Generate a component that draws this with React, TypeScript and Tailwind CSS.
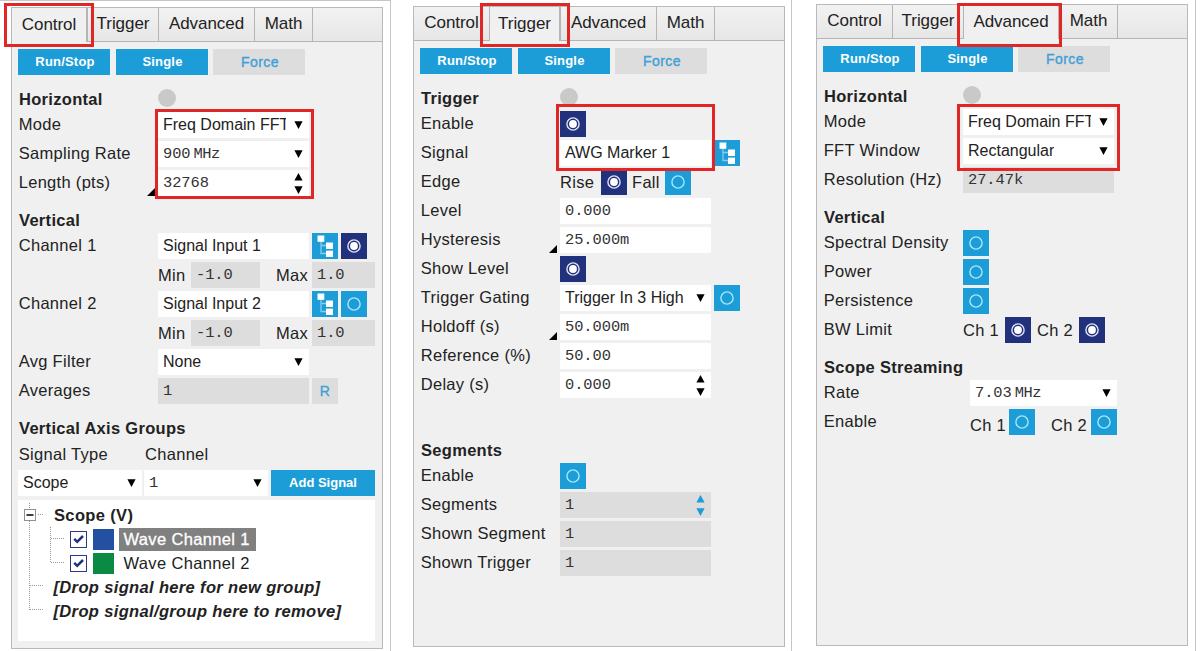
import React from 'react'
import clsx from 'clsx'

const TABS = [
  { name: 'Control', width: 'w-[76px]' },
  { name: 'Trigger', width: 'w-[71px]' },
  { name: 'Advanced', width: 'w-[96px]' },
  { name: 'Math', width: 'w-[58px]' },
]

const Arrow = ({ up = false }: { up?: boolean }) => (
  <svg width="9" height="8" viewBox="0 0 9 8" className="block shrink-0" fill="currentColor">
    <path d={up ? 'M4.5 0 L8.6 7.6 H0.4 Z' : 'M0.4 0.2 H8.6 L4.5 8 Z'} />
  </svg>
)

const Spinner = () => (
  <span className="flex shrink-0 flex-col gap-[5px]">
    <Arrow up />
    <Arrow />
  </span>
)

const Radio = ({ on = false }: { on?: boolean }) => (
  <button className={clsx('h-[26px] w-[26px] shrink-0', on ? 'bg-[#22317c]' : 'bg-[#1c9dd8]')}>
    <svg width="26" height="26" viewBox="0 0 26 26" className="block" fill="none">
      <circle cx="13" cy="13" r="6.1" stroke={on ? '#dfe4f5' : '#a6e8fa'} strokeWidth="1.4" />
      {on && <circle cx="13" cy="13" r="3.9" fill="#ffffff" />}
    </svg>
  </button>
)

const TreeButton = () => (
  <button className="h-[26px] w-[26px] shrink-0 bg-[#1c9dd8]">
    <svg width="26" height="26" viewBox="0 0 26 26" className="block">
      <path d="M9 8 V20.5 H15 M9 12.5 H15" fill="none" stroke="#86cdec" strokeWidth="1.3" />
      <rect x="5.5" y="2.5" width="6.8" height="6.3" fill="#ffffff" />
      <rect x="14" y="9.5" width="7" height="6.5" fill="#ffffff" />
      <rect x="14" y="17.6" width="7" height="6.4" fill="#ffffff" />
    </svg>
  </button>
)

type FieldProps = {
  value: string
  unit?: string
  mono?: boolean
  disabled?: boolean
  kind?: 'text' | 'select' | 'spin'
  width?: string
}

const Field = ({ value, unit, mono, disabled, kind = 'text', width = 'w-[151px]' }: FieldProps) => (
  <div
    className={clsx(
      'flex h-[26px] shrink-0 items-center justify-between pl-[5px] pr-[6.5px]',
      disabled ? 'bg-[#dddddd]' : 'bg-white',
      width
    )}
  >
    <span
      className={clsx(
        'max-w-[123px] overflow-hidden whitespace-nowrap leading-[22px]',
        mono
          ? 'pb-[1px] font-["Liberation_Mono",monospace] text-[15.4px] tracking-[-0.05px] text-[#333333]'
          : 'text-[16px] tracking-normal text-[#222222]'
      )}
    >
      {value}
      {unit && <span className="ml-[3px] tracking-[-0.5px]">{unit}</span>}
    </span>
    {kind !== 'text' && (
      <span className={disabled ? 'text-[#1c9dd8]' : 'text-black'}>
        {kind === 'select' ? <Arrow /> : <Spinner />}
      </span>
    )}
  </div>
)

const Heading = ({ children, dot }: { children: React.ReactNode; dot?: boolean }) => (
  <div className="flex h-[37px] items-start">
    <h2 className="mt-[12px] w-[140px] shrink-0 whitespace-nowrap pl-[1px] font-bold leading-6">{children}</h2>
    {dot && <span className="mt-[14px] h-[18px] w-[18px] rounded-full bg-[#c9c9c9]" />}
  </div>
)

const Row = ({ label, corner, children }: { label?: string; corner?: boolean; children?: React.ReactNode }) => (
  <div className="flex h-[26px] items-center">
    <span className="relative h-[26px] w-[140px] shrink-0 whitespace-nowrap pl-[0.7px] leading-[25px]">
      {label}
      {corner && (
        <svg width="8" height="8" className="absolute bottom-0 right-[3px]">
          <path d="M8 0 V8 H0 Z" fill="#000000" />
        </svg>
      )}
    </span>
    {children}
  </div>
)

const Rows = ({ children }: { children: React.ReactNode }) => <div className="flex flex-col gap-[3px]">{children}</div>

const MinMax = () => (
  <Row>
    <span className="w-[33px]">Min</span>
    <Field value="-1.0" mono disabled width="w-[69px]" />
    <span className="ml-[16px] w-[36px]">Max</span>
    <Field value="1.0" mono disabled width="w-[63px]" />
  </Row>
)

const ActionBar = () => (
  <div className="flex gap-[5.5px] text-[13px] font-bold leading-[26px] tracking-[0.2px] text-white">
    <button className="h-[26px] w-[92px] bg-[#1c9dd8] pl-[2px]">Run/Stop</button>
    <button className="h-[26px] w-[92px] bg-[#1c9dd8] pl-[2px]">Single</button>
    <button className="h-[26px] w-[92px] bg-[#dddddd] pl-[2px] text-[14px] font-normal tracking-[0.4px] text-[#3f9fd6] [-webkit-text-stroke:0.35px_#3f9fd6]">
      Force
    </button>
  </div>
)

const Panel = ({ active, className, children }: { active: string; className: string; children: React.ReactNode }) => (
  <section className={clsx('w-[372px] border border-[#b9b9b9] bg-[#f0f0f0]', className)}>
    <nav className="flex h-[34px] bg-linear-to-b from-[#f2f2f2] to-[#e6e6e6] text-[17px] tracking-[-0.05px]">
      {TABS.map((tab) => (
        <button
          key={tab.name}
          className={clsx(
            'shrink-0 border-r border-[#b5b5b5] pb-[1px]',
            tab.width,
            tab.name === active ? 'bg-[#f0f0f0] border-r-2' : 'border-b'
          )}
        >
          {tab.name}
        </button>
      ))}
      <span className="grow border-b border-[#b5b5b5]" />
    </nav>
    <div className="pl-[6px] pt-[7px]">
      <ActionBar />
      {children}
    </div>
  </section>
)

const Highlight = ({ className }: { className: string }) => (
  <div className={clsx('pointer-events-none absolute border-[3px] border-[#e12626]', className)} />
)

const Check = () => (
  <span className="mr-[6px] h-[17px] w-[17px] shrink-0 border border-[#2b3a86] bg-white">
    <svg width="15" height="15" viewBox="0 0 15 15" className="block">
      <path d="M3.2 6.8 L6.2 9.8 L12 4" fill="none" stroke="#22317c" strokeWidth="2.5" />
    </svg>
  </span>
)

const SignalTree = () => (
  <div className="relative mt-[4px] h-[141px] w-[357px] bg-white pt-[3px] leading-6 tracking-[0.35px]">
    <svg width="60" height="120" className="absolute left-0 top-0" fill="none" stroke="#9a9a9a" strokeDasharray="1 1">
      <path d="M11.5 3 V110 M20 14.5 H26 M32.5 27 V62 M33 38.5 H47 M33 62.5 H47 M12 85.5 H26 M12 109.5 H26" />
      <rect x="6.5" y="9.5" width="11" height="11" fill="#ffffff" stroke="#919191" strokeDasharray="none" />
      <path d="M8.5 15 H15.5" stroke="#111111" strokeWidth="1.6" strokeDasharray="none" />
    </svg>
    <div className="pl-[36px] font-bold">Scope (V)</div>
    <div className="flex h-6 items-center pl-[52px]">
      <Check />
      <span className="h-[21px] w-[21px] bg-[#2350a0]" />
      <span className="ml-[4.5px] h-[23px] bg-[#808080] pl-[5px] pr-[6px] leading-[23px] text-white [-webkit-text-stroke:0.3px_white]">
        Wave Channel 1
      </span>
    </div>
    <div className="flex h-6 items-center pl-[52px]">
      <Check />
      <span className="h-[21px] w-[21px] bg-[#0b8a43]" />
      <span className="ml-[4.5px] px-[5px]">Wave Channel 2</span>
    </div>
    <div className="pl-[35.5px] font-bold italic">[Drop signal here for new group]</div>
    <div className="pl-[35.5px] font-bold italic">[Drop signal/group here to remove]</div>
  </div>
)

const ControlPanel = () => (
  <Panel active="Control" className="ml-[11px] mt-[6px] h-[642px]">
    <Heading dot>Horizontal</Heading>
    <Rows>
      <Row label="Mode">
        <Field value="Freq Domain FFT" kind="select" />
      </Row>
      <Row label="Sampling Rate">
        <Field value="900" unit="MHz" mono kind="select" />
      </Row>
      <Row label="Length (pts)" corner>
        <Field value="32768" mono kind="spin" />
      </Row>
    </Rows>
    <Heading>Vertical</Heading>
    <Rows>
      {['1', '2'].map((channel) => (
        <React.Fragment key={channel}>
          <Row label={`Channel ${channel}`}>
            <div className="flex gap-[3px]">
              <Field value={`Signal Input ${channel}`} />
              <TreeButton />
              <Radio on={channel === '1'} />
            </div>
          </Row>
          <MinMax />
        </React.Fragment>
      ))}
      <Row label="Avg Filter">
        <Field value="None" kind="select" />
      </Row>
      <Row label="Averages">
        <Field value="1" mono disabled />
        <button className="ml-[3px] h-[26px] w-[26px] bg-[#dddddd] text-[14px] text-[#3f9fd6] [-webkit-text-stroke:0.35px_#3f9fd6]">
          R
        </button>
      </Row>
    </Rows>
    <Heading>Vertical Axis Groups</Heading>
    <div className="flex h-[29px] leading-[26px]">
      <span className="w-[127px] pl-[0.7px]">Signal Type</span>
      <span>Channel</span>
    </div>
    <div className="flex">
      <Field value="Scope" kind="select" width="w-[124px]" />
      <span className="w-[2px]" />
      <Field value="1" mono kind="select" width="w-[124px]" />
      <button className="ml-[3px] h-[26px] w-[104px] bg-[#1c9dd8] text-[13px] font-bold tracking-normal text-white">
        Add Signal
      </button>
    </div>
    <SignalTree />
  </Panel>
)

const TriggerPanel = () => (
  <Panel active="Trigger" className="ml-[22px] mt-[6px] h-[641px]">
    <Heading dot>Trigger</Heading>
    <Rows>
      <Row label="Enable">
        <Radio on />
      </Row>
      <Row label="Signal">
        <Field value="AWG Marker 1" />
        <span className="w-[3px]" />
        <TreeButton />
      </Row>
      <Row label="Edge">
        <span className="w-[41px]">Rise</span>
        <Radio on />
        <span className="w-[38px] pl-[5px]">Fall</span>
        <Radio />
      </Row>
      <Row label="Level">
        <Field value="0.000" mono />
      </Row>
      <Row label="Hysteresis" corner>
        <Field value="25.000m" mono />
      </Row>
      <Row label="Show Level">
        <Radio on />
      </Row>
      <Row label="Trigger Gating">
        <Field value="Trigger In 3 High" kind="select" />
        <span className="w-[3px]" />
        <Radio />
      </Row>
      <Row label="Holdoff (s)" corner>
        <Field value="50.000m" mono />
      </Row>
      <Row label="Reference (%)">
        <Field value="50.00" mono />
      </Row>
      <Row label="Delay (s)">
        <Field value="0.000" mono kind="spin" />
      </Row>
    </Rows>
    <div className="pt-7">
      <Heading>Segments</Heading>
    </div>
    <Rows>
      <Row label="Enable">
        <Radio />
      </Row>
      <Row label="Segments">
        <Field value="1" mono disabled kind="spin" />
      </Row>
      <Row label="Shown Segment">
        <Field value="1" mono disabled />
      </Row>
      <Row label="Shown Trigger">
        <Field value="1" mono disabled />
      </Row>
    </Rows>
  </Panel>
)

const AdvancedPanel = () => (
  <Panel active="Advanced" className="ml-[24px] mt-[4px] h-[642px]">
    <Heading dot>Horizontal</Heading>
    <Rows>
      <Row label="Mode">
        <Field value="Freq Domain FFT" kind="select" />
      </Row>
      <Row label="FFT Window">
        <Field value="Rectangular" kind="select" />
      </Row>
      <Row label="Resolution (Hz)">
        <Field value="27.47k" mono disabled />
      </Row>
    </Rows>
    <Heading>Vertical</Heading>
    <Rows>
      <Row label="Spectral Density">
        <Radio />
      </Row>
      <Row label="Power">
        <Radio />
      </Row>
      <Row label="Persistence">
        <Radio />
      </Row>
      <Row label="BW Limit">
        <span className="w-[42px]">Ch 1</span>
        <Radio on />
        <span className="w-[48px] pl-[6px]">Ch 2</span>
        <Radio on />
      </Row>
    </Rows>
    <Heading>Scope Streaming</Heading>
    <Rows>
      <Row label="Rate">
        <span className="w-[7px]" />
        <Field value="7.03" unit="MHz" mono kind="select" width="w-[147px]" />
      </Row>
      <Row label="Enable">
        <span className="w-[46px] pl-[7px] pt-[6px]">Ch 1</span>
        <Radio />
        <span className="w-[56px] pl-[16px] pt-[6px]">Ch 2</span>
        <Radio />
      </Row>
    </Rows>
  </Panel>
)

export default function App() {
  return (
    <main className='flex h-[651px] w-[1200px] overflow-hidden bg-white font-["Liberation_Sans",Arial,sans-serif] text-[16.5px] tracking-[0.3px] text-[#222222]'>
      <div className="relative w-[391px] shrink-0 whitespace-nowrap border-r border-t border-[#c6c6c6]">
        <ControlPanel />
        <Highlight className="left-[4px] top-[2px] h-[44px] w-[90px]" />
        <Highlight className="left-[155px] top-[108px] h-[90px] w-[159px]" />
      </div>
      <div className="relative w-[401px] shrink-0 whitespace-nowrap border-r border-[#c6c6c6]">
        <TriggerPanel />
        <Highlight className="left-[89px] top-[3px] h-[44px] w-[90px]" />
        <Highlight className="left-[165px] top-[104px] h-[67px] w-[159px]" />
      </div>
      <div className="relative w-[404px] shrink-0 whitespace-nowrap border-r border-[#c6c6c6]">
        <AdvancedPanel />
        <Highlight className="left-[165px] top-[3px] h-[44px] w-[105px]" />
        <Highlight className="left-[165px] top-[104px] h-[67px] w-[163px]" />
      </div>
    </main>
  )
}
